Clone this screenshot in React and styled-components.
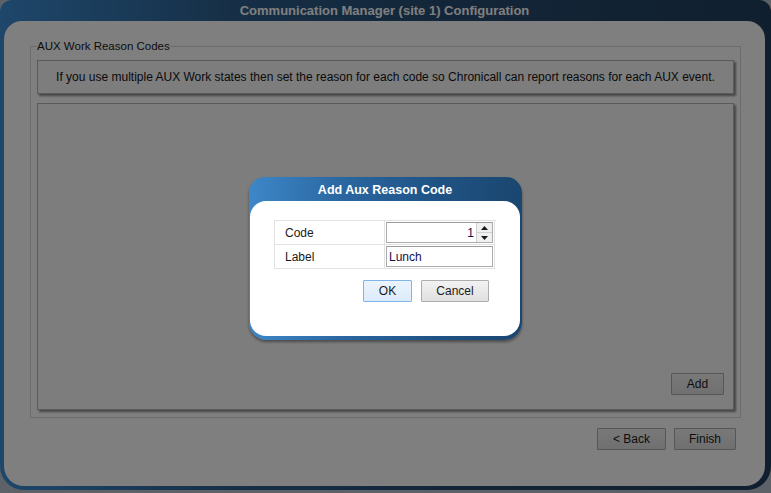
import React from 'react';
import styled, { createGlobalStyle } from 'styled-components';

const GlobalStyle = createGlobalStyle`
  html, body {
    margin: 0;
    padding: 0;
    background: #b8c4ce;
  }
  body {
    font-family: "Liberation Sans", Arial, sans-serif;
  }
`;

const Page = styled.div`
  position: relative;
  width: 771px;
  height: 493px;
  overflow: hidden;
  background: #b8c4ce;
`;

const Window = styled.div`
  display: flex;
  flex-direction: column;
  width: 771px;
  height: 490px;
  box-sizing: border-box;
  padding: 0 6px 4px 4px;
  border-radius: 12px 12px 24px 24px;
  background: linear-gradient(90deg, #3c8ed6 0%, #2d5f8e 30%, #264b70 60%, #213f5e 100%);
`;

const WindowTitle = styled.div`
  height: 21px;
  line-height: 21px;
  text-align: center;
  color: #ffffff;
  font-size: 13px;
  font-weight: bold;
  white-space: nowrap;
`;

const Body = styled.div`
  flex: 1;
  display: flex;
  flex-direction: column;
  background: #fefefe;
  border-radius: 18px 18px 20px 20px;
  padding: 19px 24px 0 26px;
`;

const Group = styled.fieldset`
  margin: 0;
  padding: 8px 6px 7px 6px;
  border: 1px solid #d8d8d8;
  box-shadow: inset 1px 1px 0 #ffffff, 1px 1px 0 #ffffff;
`;

const Legend = styled.legend`
  padding: 0;
  margin-left: 0;
  font-size: 11.5px;
  color: #1a1a1a;
`;

const GroupContent = styled.div`
  display: flex;
  flex-direction: column;
  gap: 9px;
`;

const Panel = styled.div`
  box-sizing: border-box;
  background: #fafafa;
  border: 1px solid #b4b4b4;
  box-shadow: 2px 2px 2px rgba(0, 0, 0, 0.45);
`;

const InfoBox = styled(Panel)`
  height: 34px;
  flex-shrink: 0;
  display: flex;
  align-items: center;
  justify-content: center;
  font-size: 12px;
  color: #141414;
  white-space: nowrap;
`;

const TablePanel = styled(Panel)`
  height: 307px;
  flex-shrink: 0;
  display: flex;
  align-items: flex-end;
  justify-content: flex-end;
  padding: 0 9px 14px 0;
`;

const Button = styled.button`
  box-sizing: border-box;
  height: 22px;
  width: ${({ w }) => w}px;
  padding: 0;
  font-family: "Liberation Sans", Arial, sans-serif;
  font-size: 12px;
  color: #1a1a1a;
  background: ${({ primary }) =>
    primary ? 'linear-gradient(#eaf4fc, #dcecfc)' : 'linear-gradient(#f2f2f2, #e0e0e0)'};
  border: 1px solid ${({ primary }) => (primary ? '#7eb4ea' : '#adadad')};
  border-radius: 1px;
`;

const NavRow = styled.div`
  display: flex;
  justify-content: flex-end;
  gap: 8px;
  margin-top: 10px;
  padding-right: 5px;
`;

const Overlay = styled.div`
  position: absolute;
  inset: 0;
  background: rgba(0, 0, 0, 0.5);
  display: flex;
  justify-content: center;
  align-items: flex-start;
  padding-top: 177px;
  box-sizing: border-box;
`;

const Dialog = styled.div`
  width: 273px;
  height: 163px;
  box-sizing: border-box;
  display: flex;
  flex-direction: column;
  padding: 0 2px 4px 1px;
  border-radius: 16px 16px 18px 18px;
  background: linear-gradient(90deg, #3d87c8 0%, #2a66a0 35%, #1f5284 70%, #1a466f 100%);
  box-shadow: 0 2px 3px rgba(0, 0, 0, 0.4);
`;

const DialogTitle = styled.div`
  height: 24px;
  line-height: 27px;
  text-align: center;
  color: #ffffff;
  font-size: 12.5px;
  font-weight: bold;
`;

const DialogBody = styled.div`
  flex: 1;
  background: #ffffff;
  border-radius: 16px;
  padding: 19px 25px 0 24px;
  display: flex;
  flex-direction: column;
`;

const Grid = styled.div`
  display: grid;
  grid-template-columns: 110px 110px;
  grid-auto-rows: 24px;
  border-top: 1px solid #e2e2e2;
  border-left: 1px solid #e2e2e2;
  width: 221px;
`;

const Cell = styled.div`
  box-sizing: border-box;
  border-right: 1px solid #e2e2e2;
  border-bottom: 1px solid #e2e2e2;
  display: flex;
  align-items: center;
  padding: ${({ field }) => (field ? '1px' : '0 0 0 10px')};
  font-size: 12px;
  color: #1a1a1a;
`;

const Input = styled.div`
  flex: 1;
  align-self: stretch;
  box-sizing: border-box;
  display: flex;
  align-items: center;
  border: 1px solid #ababab;
  border-top-color: #9a9a9a;
  background: #fff;
  font-size: 12px;
  color: #10104a;
  padding-left: 2px;
`;

const Value = styled.span`
  flex: 1;
  text-align: ${({ right }) => (right ? 'right' : 'left')};
  padding-right: ${({ right }) => (right ? '2px' : '0')};
`;

const Spinner = styled.div`
  width: 15px;
  align-self: stretch;
  display: flex;
  flex-direction: column;
  border-left: 1px solid #d0d0d0;
  background: #f0f0f0;
`;

const SpinHalf = styled.div`
  flex: 1;
  display: flex;
  align-items: center;
  justify-content: center;
  border-bottom: ${({ top }) => (top ? '1px solid #d0d0d0' : 'none')};
`;

const DialogButtons = styled.div`
  display: flex;
  justify-content: flex-end;
  gap: 9px;
  margin-top: 11px;
  padding-right: 6px;
`;

const Arrow = ({ up }) => (
  <svg width="7" height="4" viewBox="0 0 7 4">
    <path d={up ? 'M0 4 L3.5 0 L7 4 Z' : 'M0 0 L3.5 4 L7 0 Z'} fill="#1a1a1a" />
  </svg>
);

export default function App() {
  return (
    <>
      <GlobalStyle />
      <Page>
        <Window>
          <WindowTitle>Communication Manager (site 1) Configuration</WindowTitle>
          <Body>
            <Group>
              <Legend>AUX Work Reason Codes</Legend>
              <GroupContent>
                <InfoBox>
                  If you use multiple AUX Work states then set the reason for each code so Chronicall can report reasons for each AUX event.
                </InfoBox>
                <TablePanel>
                  <Button w={53}>Add</Button>
                </TablePanel>
              </GroupContent>
            </Group>
            <NavRow>
              <Button w={69}>&lt; Back</Button>
              <Button w={62}>Finish</Button>
            </NavRow>
          </Body>
        </Window>
        <Overlay>
          <Dialog>
            <DialogTitle>Add Aux Reason Code</DialogTitle>
            <DialogBody>
              <Grid>
                <Cell>Code</Cell>
                <Cell field>
                  <Input>
                    <Value right>1</Value>
                    <Spinner>
                      <SpinHalf top><Arrow up /></SpinHalf>
                      <SpinHalf><Arrow /></SpinHalf>
                    </Spinner>
                  </Input>
                </Cell>
                <Cell>Label</Cell>
                <Cell field>
                  <Input>
                    <Value>Lunch</Value>
                  </Input>
                </Cell>
              </Grid>
              <DialogButtons>
                <Button w={49} primary>OK</Button>
                <Button w={68}>Cancel</Button>
              </DialogButtons>
            </DialogBody>
          </Dialog>
        </Overlay>
      </Page>
    </>
  );
}
